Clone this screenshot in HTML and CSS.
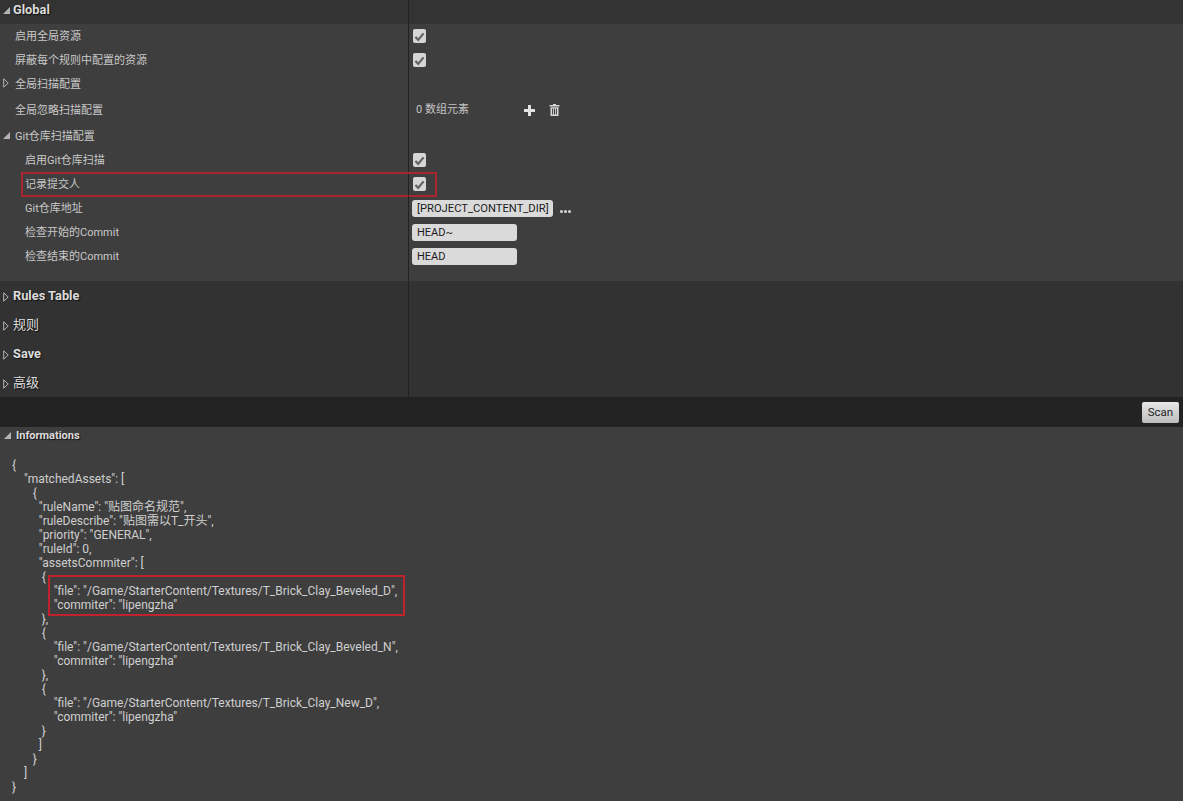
FILE: index.html
```html
<!DOCTYPE html>
<html lang="zh-CN">
<head>
<meta charset="utf-8">
<title>Details</title>
<link rel="stylesheet" href="styles.css">
</head>
<body>
<svg class="defs" width="0" height="0" aria-hidden="true">
  <symbol id="open" viewBox="0 0 8 8"><path d="M8 0V8H0Z"/></symbol>
  <symbol id="closed" viewBox="0 0 6 10"><path d="M.7.8 5.2 5 .7 9.2Z"/></symbol>
  <symbol id="check" viewBox="0 0 14 14"><path d="M2.6 7.6 5.6 10.6 11.4 3.6" /></symbol>
</svg>
<main class="app">
  <section class="details">
    <div class="cat cat-global"><div class="name"><svg class="tri-open"><use href="#open"/></svg><span class="bold">Global</span></div><div class="val"></div></div>
    <div class="rows">
      <div class="row"><div class="name ind1">启用全局资源</div><div class="val"><span class="cb"><svg><use href="#check"/></svg></span></div></div>
      <div class="row"><div class="name ind1">屏蔽每个规则中配置的资源</div><div class="val"><span class="cb"><svg><use href="#check"/></svg></span></div></div>
      <div class="row"><div class="name ind1"><svg class="tri-closed sub"><use href="#closed"/></svg>全局扫描配置</div><div class="val"></div></div>
      <div class="row tall"><div class="name ind1">全局忽略扫描配置</div><div class="val">
        <span class="count">0 数组元素</span>
        <svg class="ic-plus" viewBox="0 0 11 11"><path d="M4 0h3v4h4v3H7v4H4V7H0V4h4Z"/></svg>
        <svg class="ic-trash" viewBox="0 0 10 12"><path d="M3.5 0h3v1H10v1.4H0V1h3.5ZM1 3.2h8V12H1ZM2.6 4.4v6.2h1V4.4ZM4.5 4.4v6.2h1V4.4ZM6.4 4.4v6.2h1V4.4Z" fill-rule="evenodd"/></svg>
      </div></div>
      <div class="row"><div class="name ind1"><svg class="tri-open sub"><use href="#open"/></svg>Git仓库扫描配置</div><div class="val"></div></div>
      <div class="row"><div class="name ind2">启用Git仓库扫描</div><div class="val"><span class="cb"><svg><use href="#check"/></svg></span></div></div>
      <div class="row"><div class="name ind2">记录提交人</div><div class="val"><span class="cb"><svg><use href="#check"/></svg></span></div><div class="mark mark-row"></div></div>
      <div class="row"><div class="name ind2">Git仓库地址</div><div class="val"><span class="input auto">[PROJECT_CONTENT_DIR]</span><span class="dots"><i></i><i></i><i></i></span></div></div>
      <div class="row"><div class="name ind2">检查开始的Commit</div><div class="val"><span class="input">HEAD~</span></div></div>
      <div class="row"><div class="name ind2">检查结束的Commit</div><div class="val"><span class="input">HEAD</span></div></div>
      <div class="row-end"><div class="name"></div><div class="val"></div></div>
    </div>
    <div class="cat"><div class="name"><svg class="tri-closed"><use href="#closed"/></svg><span class="bold">Rules Table</span></div><div class="val"></div></div>
    <div class="cat"><div class="name"><svg class="tri-closed"><use href="#closed"/></svg><span class="bold cjk">规则</span></div><div class="val"></div></div>
    <div class="cat"><div class="name"><svg class="tri-closed"><use href="#closed"/></svg><span class="bold">Save</span></div><div class="val"></div></div>
    <div class="cat"><div class="name"><svg class="tri-closed"><use href="#closed"/></svg><span class="bold cjk">高级</span></div><div class="val"></div></div>
  </section>
  <div class="toolbar"><button class="scan" type="button">Scan</button></div>
  <section class="info">
    <div class="info-head"><svg class="tri-open"><use href="#open"/></svg><span class="bold small">Informations</span></div>
    <div class="json-wrap">
<pre class="json">{
    "matchedAssets": [
       {
         "ruleName": "贴图命名规范",
         "ruleDescribe": "贴图需以T_开头",
         "priority": "GENERAL",
         "ruleId": 0,
         "assetsCommiter": [
          {
              "file": "/Game/StarterContent/Textures/T_Brick_Clay_Beveled_D",
              "commiter": "lipengzha"
          },
          {
              "file": "/Game/StarterContent/Textures/T_Brick_Clay_Beveled_N",
              "commiter": "lipengzha"
          },
          {
              "file": "/Game/StarterContent/Textures/T_Brick_Clay_New_D",
              "commiter": "lipengzha"
          }
         ]
       }
    ]
}</pre>
      <div class="mark mark-json"></div>
    </div>
  </section>
</main>
</body>
</html>
```
FILE: styles.css
```css
* { box-sizing: border-box; }
html, body { margin: 0; height: 100%; overflow: hidden; }
body {
  background: #3e3e3e;
  color: #d2d2d2;
  font: 11px/14px Roboto, "Noto Sans CJK SC", sans-serif;
}
.defs { position: absolute; }
.app { display: flex; flex-direction: column; height: 801px; }

.details { display: flex; flex-direction: column; height: 397px; background: #333; flex: none; }
.cat { display: grid; grid-template-columns: 408px 1fr; height: 29px; background: #323232; }
.cat-global { height: 24px; background: #333; }
.cat-global .name { padding-bottom: 4px; }
.cat .name { display: flex; align-items: center; padding-left: 3px; }
.cat .val, .row .val, .row-end .val { border-left: 1px solid #222; }
.rows { background: #3e3e3e; flex: none; }
.row { position: relative; display: grid; grid-template-columns: 408px 1fr; height: 24px; }
.row.tall { height: 28px; }
.row-end { display: grid; grid-template-columns: 408px 1fr; height: 13px; }
.row .name { display: flex; align-items: center; color: #c8c8c8; padding-top: 2px; }
.row .val { display: flex; align-items: center; padding-left: 4px; }
.ind1 { padding-left: 15px; position: relative; }
.ind2 { padding-left: 25px; }

.bold { font-weight: 700; font-size: 12.8px; color: #dcdcdc; text-shadow: 1px 1px 1px #111; }
.bold.cjk { font-weight: 400; font-size: 13px; }
.bold.small { font-size: 11px; }
.tri-open { width: 7px; height: 7px; margin-right: 3px; fill: #b4b4b4; flex: none; }
.tri-closed { width: 6px; height: 10px; margin: 2px 4px 0 0; fill: none; stroke: #b4b4b4; stroke-width: 1; flex: none; }
.sub { position: absolute; left: 3px; }
.sub.tri-closed { top: 6px; margin: 0; }
.sub.tri-open { top: 8px; margin: 0; }

.cb { width: 13px; height: 14px; border-radius: 2px; background: #d6d6d6; display: flex; align-items: center; justify-content: center; }
.cb svg { width: 13px; height: 13px; fill: none; stroke: #636363; stroke-width: 2.4; }
.count { width: 111px; padding-left: 3px; color: #c4c4c4; }
.ic-plus { width: 11px; height: 11px; fill: #e2e2e2; margin-right: 14px; }
.ic-trash { width: 11px; height: 12px; fill: #d8d8d8; }
.input {
  width: 105px; height: 17px; border-radius: 3px; background: #dadada; color: #1c1c1c;
  line-height: 17px; padding-left: 5px; flex: none; font-size: 11px; margin-left: -1px;
}
.input.auto { width: 141px; padding: 0 0 0 5px; margin-right: 7px; font-size: 11.2px; }
.dots { display: flex; gap: 1px; margin-top: 6px; }
.dots i { width: 3px; height: 3px; border-radius: 50%; background: #d8d8d8; }

.mark { position: absolute; border: 2px solid #b92531; pointer-events: none; }
.mark-row { left: 21px; top: 0; width: 416px; height: 25px; border-color: #a8262f; }
.mark-json { left: 48px; top: 132px; width: 357px; height: 41px; border-color: #c1232e; }

.toolbar { height: 30px; background: #232323; display: flex; align-items: center; justify-content: flex-end; padding-right: 4px; flex: none; }
.scan {
  width: 37px; height: 21px; padding: 0; border: 0; border-radius: 2px;
  background: linear-gradient(#e6e6e6, #bdbdbd); color: #222;
  font: 11.5px Roboto, sans-serif;
}
.info { flex: 1; background: #3e3e3e; }
.info-head { display: flex; align-items: center; height: 16px; padding: 1px 0 0 4px; }
.info-head .tri-open { margin-right: 5px; }
.json-wrap { position: relative; padding: 15px 0 0 12px; }
.json { margin: 0; font: 12px/14px Roboto, "Noto Sans CJK SC", sans-serif; color: #cfcfcf; }
```
